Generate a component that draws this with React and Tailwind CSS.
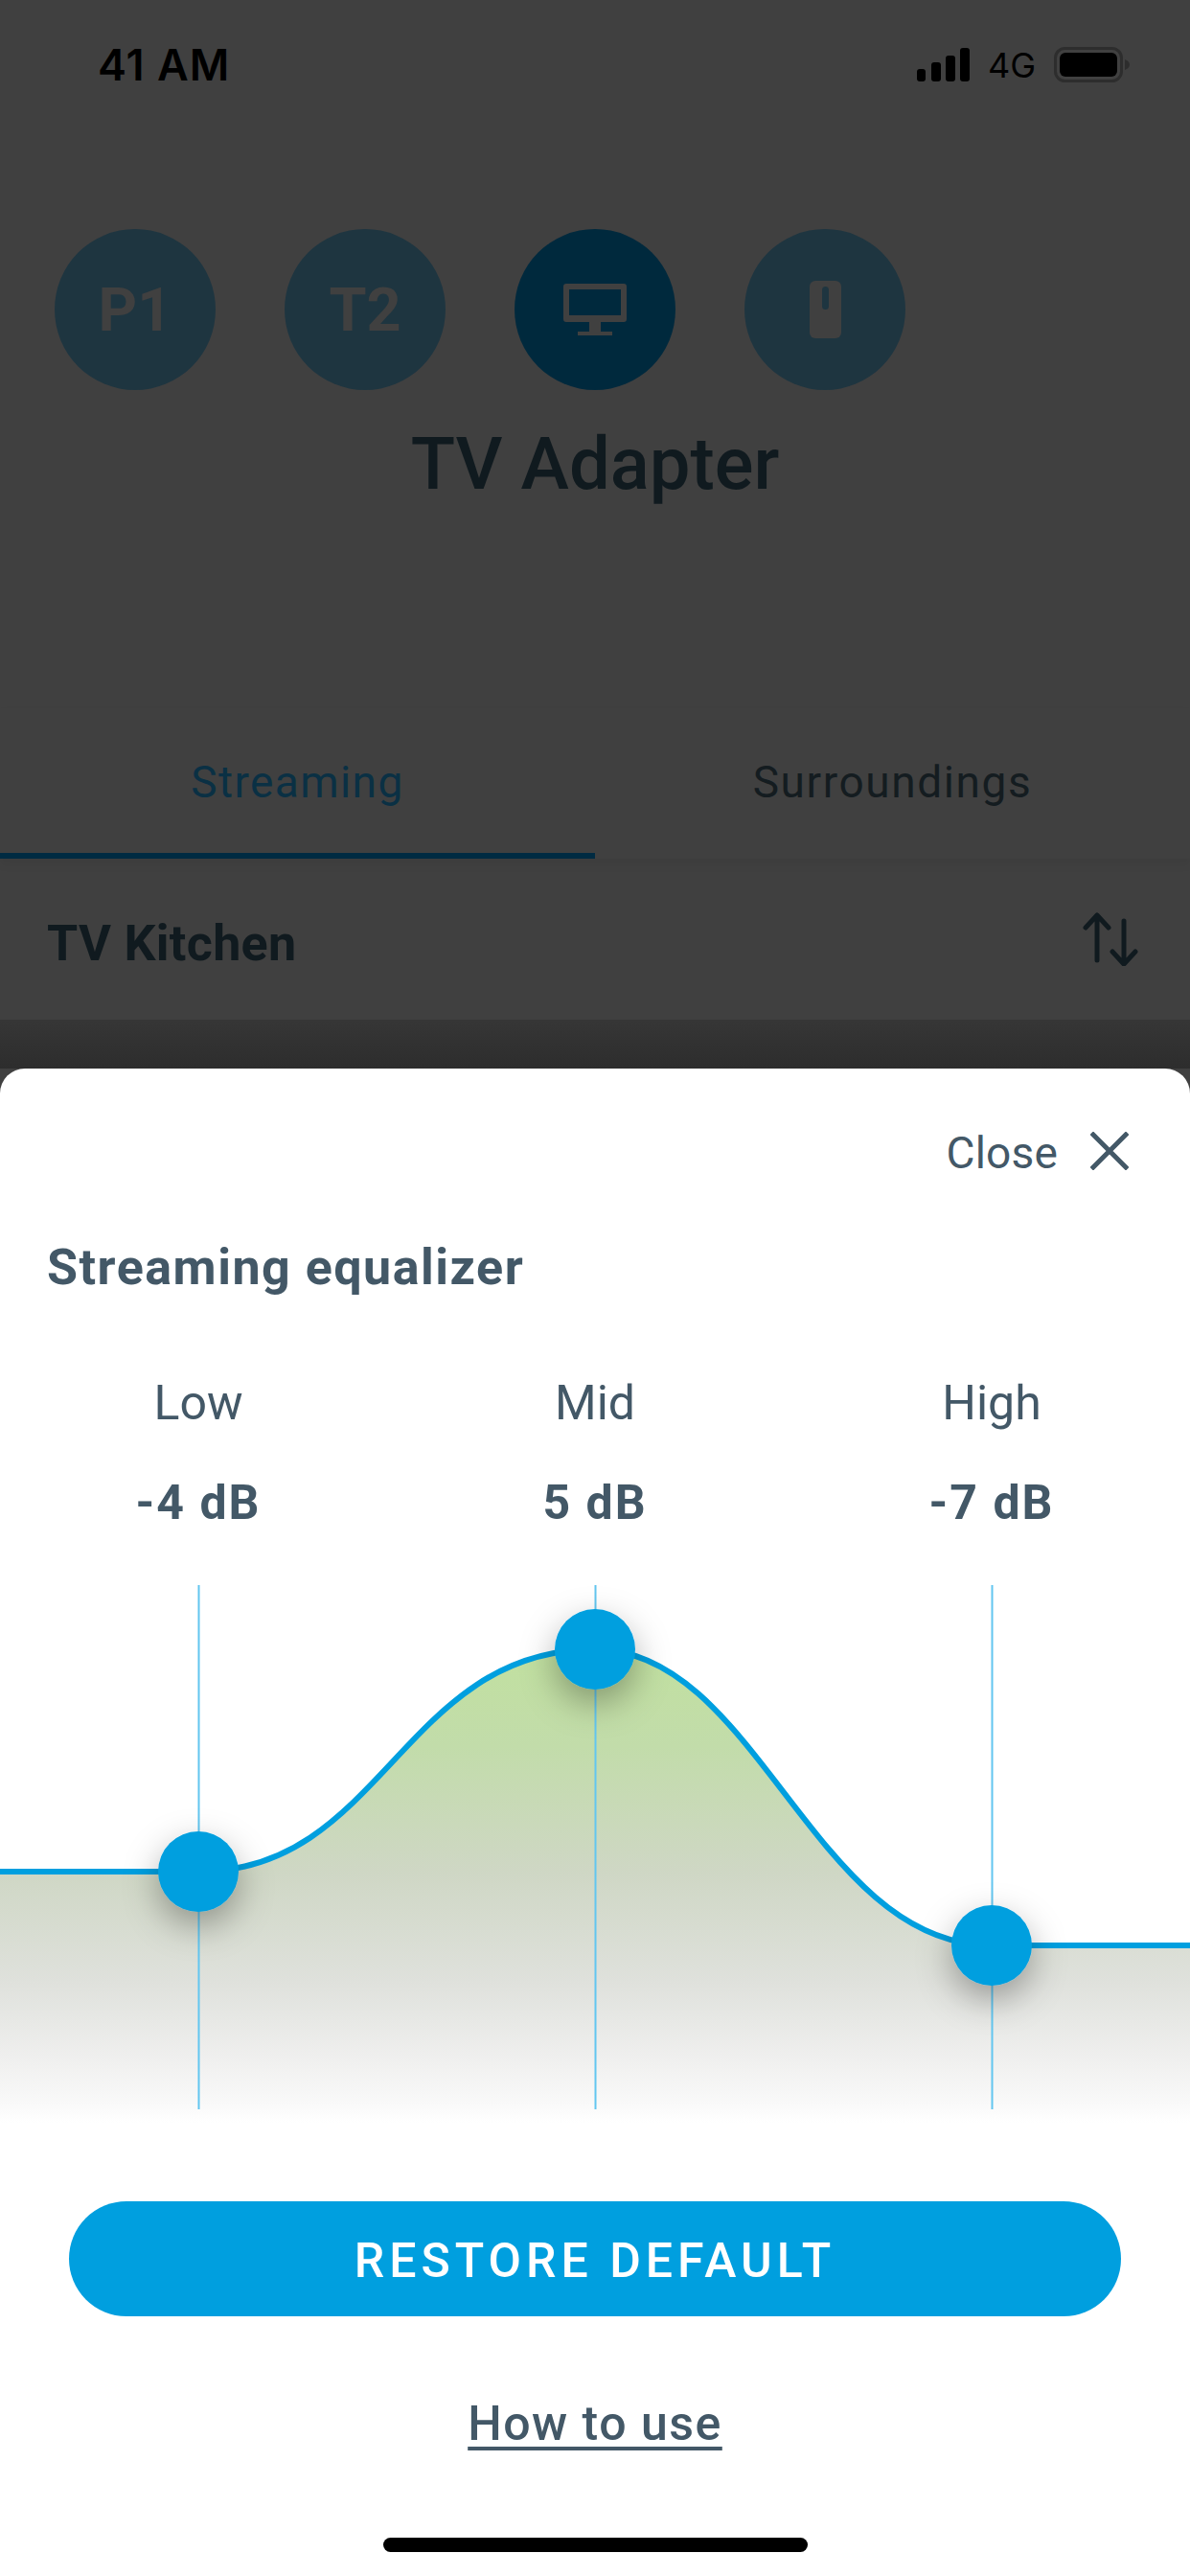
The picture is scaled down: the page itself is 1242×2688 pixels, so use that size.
const din = "font-['Roboto',sans-serif]";

function Signal() {
  return (
    <svg width="56" height="36" viewBox="0 0 56 36" fill="#000">
      <rect x="1" y="22" width="9" height="13" rx="3" />
      <rect x="16" y="15" width="10" height="20" rx="3" />
      <rect x="31" y="8" width="10" height="27" rx="3" />
      <rect x="46" y="0" width="10" height="35" rx="3" />
    </svg>
  );
}

function Battery() {
  return (
    <svg width="80" height="38" viewBox="0 0 80 38">
      <rect x="1.5" y="1.5" width="69" height="34" rx="10" fill="none" stroke="#2d2d2d" strokeWidth="3" />
      <rect x="6" y="6" width="60" height="25" rx="6" fill="#000" />
      <path d="M74 13c3 1 5 3 5 5.500s-2 4.500-5 5.500z" fill="#2d2d2d" />
    </svg>
  );
}

function Monitor() {
  return (
    <svg width="66" height="54" viewBox="0 0 66 54" fill="#404040">
      <path fillRule="evenodd" d="M3 0h60a3 3 0 0 1 3 3v34a3 3 0 0 1-3 3H3a3 3 0 0 1-3-3V3a3 3 0 0 1 3-3zM6 6v27h54V6z" />
      <rect x="27" y="40" width="12" height="10" />
      <rect x="15" y="50" width="36" height="4" />
    </svg>
  );
}

function Remote() {
  return (
    <svg width="33" height="60" viewBox="0 0 33 60">
      <rect width="33" height="60" rx="6" fill="#404040" />
      <rect x="13" y="6" width="7" height="24" rx="3.500" fill="#1e3540" />
    </svg>
  );
}

function Circle({ active, children }) {
  return (
    <div className={`flex h-[168px] w-[168px] items-center justify-center rounded-full ${active ? "bg-[#00293d]" : "bg-[#1e3540]"}`}>
      {children}
    </div>
  );
}

function Equalizer() {
  const curve = "C400 1954 420 1722 621 1722 C790 1722 850 2031 1035 2031";
  return (
    <svg className="block" width="1242" height="590" viewBox="0 1640 1242 590">
      <defs>
        <linearGradient id="fill" gradientUnits="userSpaceOnUse" x1="0" y1="1726" x2="0" y2="2216">
          <stop offset="0" stopColor="#c1e0a0" />
          <stop offset="0.2" stopColor="#c2dcaa" />
          <stop offset="0.47" stopColor="#cfd7c5" />
          <stop offset="0.7" stopColor="#dfe1dc" />
          <stop offset="0.86" stopColor="#efefee" />
          <stop offset="0.96" stopColor="#f9f9f9" />
          <stop offset="1" stopColor="#ffffff" />
        </linearGradient>
        <filter id="shadow" x="-100%" y="-100%" width="300%" height="320%">
          <feDropShadow dx="0" dy="14" stdDeviation="18" floodColor="#000" floodOpacity="0.32" />
        </filter>
      </defs>
      <path d={`M0 1954 L207 1954 ${curve} L1242 2031 L1242 2216 L0 2216 Z`} fill="url(#fill)" />
      <g stroke="#62c6f0" strokeWidth="2">
        <line x1="207.500" y1="1655" x2="207.500" y2="2202" />
        <line x1="621.500" y1="1655" x2="621.500" y2="2202" />
        <line x1="1035.500" y1="1655" x2="1035.500" y2="2202" />
      </g>
      <path d={`M0 1954 L207 1954 ${curve} L1242 2031`} fill="none" stroke="#009fdf" strokeWidth="6" />
      <g fill="#009fdf" filter="url(#shadow)">
        <circle cx="207" cy="1954" r="42" />
        <circle cx="621" cy="1722" r="42" />
        <circle cx="1035" cy="2031" r="42" />
      </g>
    </svg>
  );
}

function Band({ name, value }) {
  return (
    <div className="flex flex-col items-center">
      <div className="h-[60px] text-[50px] leading-[60px] font-normal">{name}</div>
      <div className="mt-[44px] h-[60px] text-[50px] leading-[60px] font-bold tracking-[2px]">{value}</div>
    </div>
  );
}

export default function App() {
  return (
    <div className={`flex h-[2688px] w-[1242px] flex-col overflow-hidden bg-[#404040] ${din}`}>
      <div className="flex h-[239px] items-start justify-between pt-[42px] pr-[62px] pl-[102px]">
        <div className="font-['Inter',sans-serif] text-[45px] leading-[52px] font-semibold tracking-[1px] text-black">41 AM</div>
        <div className="flex items-center pt-[7px]">
          <Signal />
          <span className="ml-[19px] font-['Inter',sans-serif] text-[36px] leading-[38px] text-black">4G</span>
          <span className="ml-[19px]"><Battery /></span>
        </div>
      </div>

      <div className="flex gap-[72px] pl-[57px]">
        <Circle><span className="text-[63px] leading-none font-bold text-[#404040]">P1</span></Circle>
        <Circle><span className="text-[63px] leading-none font-bold text-[#404040]">T2</span></Circle>
        <Circle active><Monitor /></Circle>
        <Circle><Remote /></Circle>
      </div>

      <div className="mt-[35px] h-[84px] text-center text-[76px] leading-[84px] font-medium text-[#101a1f]">TV Adapter</div>

      <div className="mt-[213px] flex h-[157px] shadow-[0_6px_10px_rgba(0,0,0,0.06)]">
        <div className="flex w-[621px] items-center justify-center border-b-[6px] border-[#002b42] pt-[4px] text-[46px] font-normal tracking-[1.4px] text-[#0a3044]">Streaming</div>
        <div className="flex w-[621px] items-center justify-center pb-[2px] text-[46px] font-normal tracking-[1.6px] text-[#141c20]">Surroundings</div>
      </div>

      <div className="flex h-[168px] items-center justify-between pt-[9px] pr-[54px] pl-[49px]">
        <span className="text-[52px] font-bold tracking-[0.3px] text-[#101a1f]">TV Kitchen</span>
        <svg className="-mt-[9px]" width="58" height="56" viewBox="0 0 58 56" fill="none" stroke="#101a1f" strokeWidth="5" strokeLinecap="round" strokeLinejoin="round">
          <path d="M15 50V3M3 16 15 3 27 16" />
          <path d="M43 9v44M31 41l12 13 12-13" />
        </svg>
      </div>

      <div className="h-[51px] bg-gradient-to-b from-[#363636] to-[#2d2d2d]" />

      <div className="flex flex-1 flex-col rounded-t-[26px] bg-white text-[#435867]">
        <div className="flex h-[120px] items-center justify-end pt-[48px] pr-[64px]">
          <span className="pt-[8px] text-[46px] font-normal tracking-[0.2px]">Close</span>
          <svg className="ml-[34px] mt-[3px]" width="40" height="40" viewBox="0 0 40 40" stroke="#435867" strokeWidth="5" strokeLinecap="square">
            <path d="M3 3 37 37M37 3 3 37" />
          </svg>
        </div>
        <div className="mt-[58px] pl-[49px] text-[52px] leading-[60px] font-bold tracking-[1.5px]">Streaming equalizer</div>
        <div className="mt-[81px] grid grid-cols-3">
          <Band name="Low" value="-4 dB" />
          <Band name="Mid" value="5 dB" />
          <Band name="High" value="-7 dB" />
        </div>
        <div className="mt-[41px]"><Equalizer /></div>
        <button className="mx-[72px] mt-[68px] flex h-[120px] items-center justify-center rounded-full bg-[#009fdf] pt-[5px] text-[50px] font-medium tracking-[5px] text-white">RESTORE DEFAULT</button>
        <div className="mt-[82px] text-center text-[50px] leading-[60px] font-medium tracking-[1.5px] underline decoration-[4px] underline-offset-[7px]">How to use</div>
        <div className="mx-auto mt-[89px] h-[15px] w-[443px] rounded-full bg-black" />
      </div>
    </div>
  );
}
